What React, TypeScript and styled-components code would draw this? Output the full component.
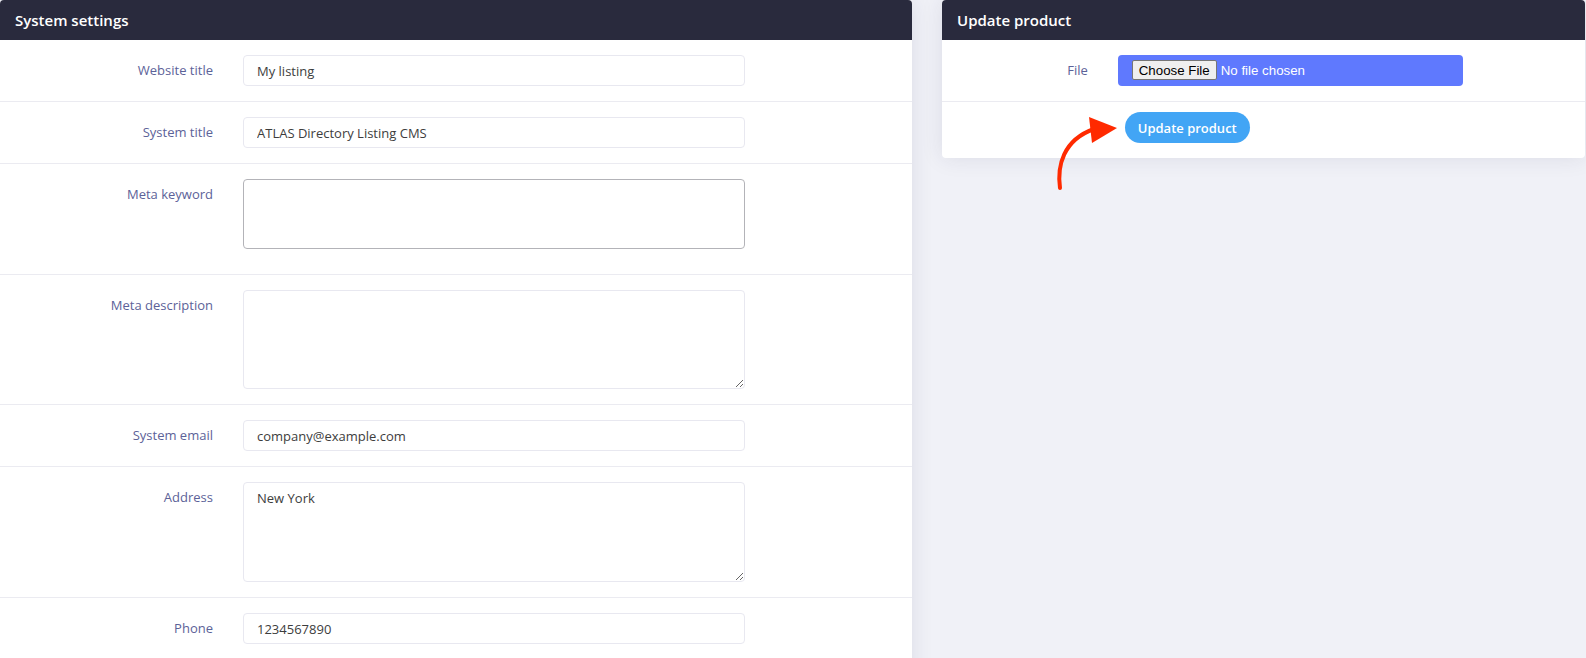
import React from "react";
import styled, { createGlobalStyle } from "styled-components";

const GlobalStyle = createGlobalStyle`
  html, body {
    margin: 0;
    padding: 0;
    background: #f0f1f7;
    overflow: hidden;
    font-family: "Open Sans", "Liberation Sans", sans-serif;
  }
`;

const Page = styled.div`
  position: relative;
  display: flex;
  align-items: flex-start;
  gap: 30px;
  padding-right: 1px;
  height: 658px;
  overflow: hidden;
`;

const Card = styled.section<{ $width?: string; $tall?: boolean }>`
  flex: ${(p) => (p.$width ? `0 0 ${p.$width}` : "1 1 auto")};
  min-height: ${(p) => (p.$tall ? "720px" : "0")};
  background: #fff;
  border-radius: 4px;
  box-shadow: 0 0 22px rgba(40, 42, 80, 0.1);
  overflow: hidden;
`;

const CardHeader = styled.header`
  height: 40px;
  display: flex;
  align-items: center;
  padding: 0 15px;
  background: #292a3d;
  color: #fff;
  font-size: 15px;
  font-weight: 600;
`;

const FormRow = styled.div<{ $bottom?: number }>`
  display: flex;
  align-items: flex-start;
  padding: 15px 0 ${(p) => p.$bottom ?? 15}px;
  border-bottom: 1px solid #ebebf1;

  &:last-child {
    border-bottom: none;
  }
`;

const Label = styled.label`
  flex: 0 0 25%;
  box-sizing: border-box;
  padding: 7px 15px 0;
  text-align: right;
  font-size: 13px;
  line-height: 17px;
  color: #5c6298;
`;

const Field = styled.div`
  flex: 0 0 58.3333%;
  box-sizing: border-box;
  padding: 0 15px;
`;

const TextInput = styled.input`
  display: block;
  width: 100%;
  box-sizing: border-box;
  height: 31px;
  padding: 0 13px;
  border: 1px solid #e8e8f0;
  border-radius: 4px;
  font-family: inherit;
  font-size: 13px;
  color: #3d3d3d;
  background: #fff;
  outline: none;
`;

const TextArea = styled.textarea<{ $height: number; $strong?: boolean }>`
  display: block;
  width: 100%;
  box-sizing: border-box;
  height: ${(p) => p.$height}px;
  padding: 7px 13px;
  border: 1px solid ${(p) => (p.$strong ? "#b3b3b8" : "#e8e8f0")};
  border-radius: 4px;
  font-family: inherit;
  font-size: 13px;
  line-height: 17px;
  color: #3d3d3d;
  background: #fff;
  resize: ${(p) => (p.$strong ? "none" : "vertical")};
  outline: none;
`;

const FileInput = styled.input`
  display: block;
  width: 100%;
  box-sizing: border-box;
  height: 31px;
  padding: 5px 14px;
  border: none;
  border-radius: 4px;
  background: #5f79fe;
  color: #fff;
  font-family: "Liberation Sans", Arial, sans-serif;
  font-size: 13.3px;

  &::file-selector-button {
    font-family: "Liberation Sans", Arial, sans-serif;
    font-size: 13.3px;
    margin-right: 4px;
    padding: 1px 6px;
    height: 20px;
    border: 1px solid #767676;
    border-radius: 2px;
    background: #efefef;
    color: #000;
  }
`;

const ActionRow = styled.div`
  padding: 10px 0 15px calc(25% + 22px);
`;

const PrimaryButton = styled.button`
  height: 31px;
  padding: 0 13px;
  border: none;
  border-radius: 16px;
  background: #42a5f5;
  color: #fff;
  font-family: inherit;
  font-size: 13px;
  font-weight: 600;
  cursor: pointer;
`;

const Arrow = styled.svg`
  position: absolute;
  left: 1050px;
  top: 110px;
  width: 72px;
  height: 82px;
  overflow: visible;
`;

export default function App() {
  return (
    <>
      <GlobalStyle />
      <Page>
        <Card $width="912px" $tall>
          <CardHeader>System settings</CardHeader>
          <FormRow>
            <Label>Website title</Label>
            <Field>
              <TextInput defaultValue="My listing" />
            </Field>
          </FormRow>
          <FormRow>
            <Label>System title</Label>
            <Field>
              <TextInput defaultValue="ATLAS Directory Listing CMS" />
            </Field>
          </FormRow>
          <FormRow $bottom={25}>
            <Label>Meta keyword</Label>
            <Field>
              <TextArea $height={70} $strong />
            </Field>
          </FormRow>
          <FormRow>
            <Label>Meta description</Label>
            <Field>
              <TextArea $height={99} />
            </Field>
          </FormRow>
          <FormRow>
            <Label>System email</Label>
            <Field>
              <TextInput defaultValue="company@example.com" />
            </Field>
          </FormRow>
          <FormRow>
            <Label>Address</Label>
            <Field>
              <TextArea $height={100} defaultValue="New York" />
            </Field>
          </FormRow>
          <FormRow>
            <Label>Phone</Label>
            <Field>
              <TextInput defaultValue="1234567890" />
            </Field>
          </FormRow>
        </Card>

        <Card>
          <CardHeader>Update product</CardHeader>
          <FormRow>
            <Label>File</Label>
            <Field>
              <FileInput type="file" />
            </Field>
          </FormRow>
          <ActionRow>
            <PrimaryButton>Update product</PrimaryButton>
          </ActionRow>
        </Card>

        <Arrow viewBox="1050 110 72 82">
          <path
            d="M1060 188 C1057 166 1063 140 1094 129"
            fill="none"
            stroke="#ff2a00"
            strokeWidth="4"
            strokeLinecap="round"
          />
          <polygon points="1089,117 1117,128 1092,143" fill="#ff2a00" />
        </Arrow>
      </Page>
    </>
  );
}
